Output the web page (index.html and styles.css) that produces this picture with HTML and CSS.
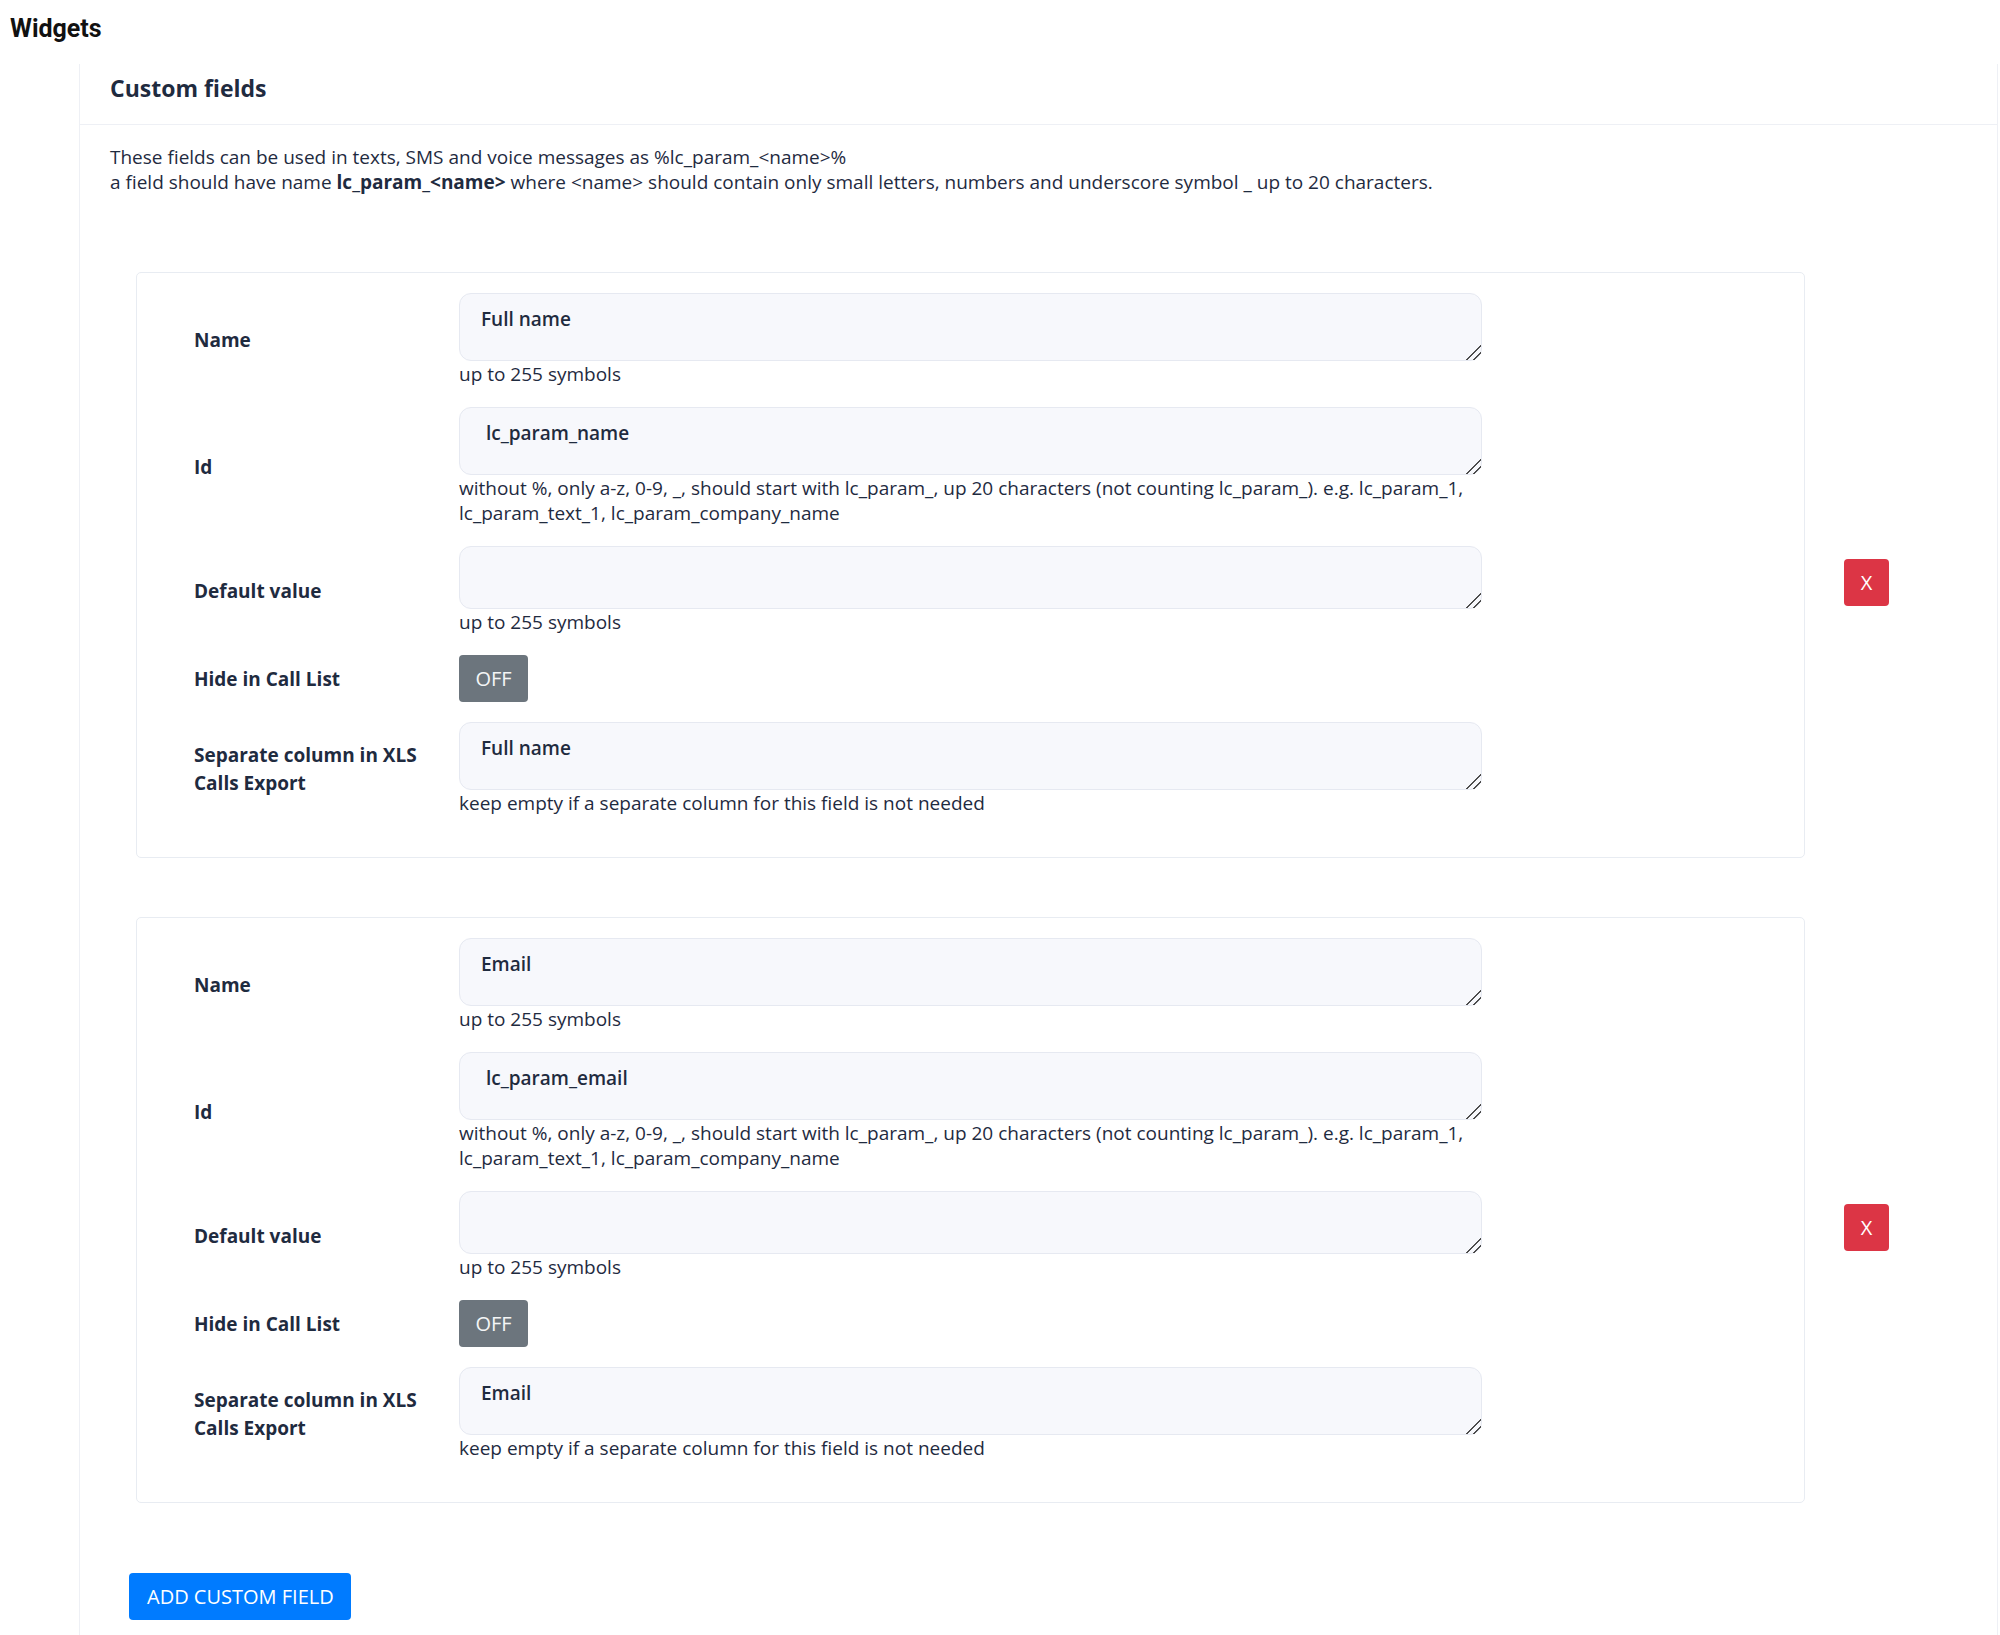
FILE: index.html
```html
<!DOCTYPE html>
<html lang="en">
<head>
<meta charset="utf-8">
<title>Widgets - Custom fields</title>
<link rel="stylesheet" href="styles.css">
</head>
<body>
<h1 class="page-title">Widgets</h1>
<div class="panel">
  <div class="panel-header"><h2 class="panel-title">Custom fields</h2></div>
  <div class="panel-body">
    <p class="intro">These fields can be used in texts, SMS and voice messages as %lc_param_&lt;name&gt;%<br>a field should have name <b>lc_param_&lt;name&gt;</b> where &lt;name&gt; should contain only small letters, numbers and underscore symbol _ up to 20 characters.</p>

    <div class="field-row">
      <div class="card">
        <div class="form-row">
          <label class="form-label">Name</label>
          <div class="form-control">
            <textarea class="input" readonly>Full name</textarea>
            <div class="help">up to 255 symbols</div>
          </div>
        </div>
        <div class="form-row">
          <label class="form-label">Id</label>
          <div class="form-control">
            <textarea class="input" readonly> lc_param_name</textarea>
            <div class="help">without %, only a-z, 0-9, _, should start with lc_param_, up 20 characters (not counting lc_param_). e.g. lc_param_1, lc_param_text_1, lc_param_company_name</div>
          </div>
        </div>
        <div class="form-row">
          <label class="form-label">Default value</label>
          <div class="form-control">
            <textarea class="input input-empty" readonly></textarea>
            <div class="help">up to 255 symbols</div>
          </div>
        </div>
        <div class="form-row">
          <label class="form-label">Hide in Call List</label>
          <div class="form-control">
            <button class="btn-toggle" type="button">OFF</button>
          </div>
        </div>
        <div class="form-row">
          <label class="form-label">Separate column in XLS Calls Export</label>
          <div class="form-control">
            <textarea class="input" readonly>Full name</textarea>
            <div class="help">keep empty if a separate column for this field is not needed</div>
          </div>
        </div>
      </div>
      <div class="remove-col"><button class="btn-remove" type="button">X</button></div>
    </div>

    <div class="field-row">
      <div class="card">
        <div class="form-row">
          <label class="form-label">Name</label>
          <div class="form-control">
            <textarea class="input" readonly>Email</textarea>
            <div class="help">up to 255 symbols</div>
          </div>
        </div>
        <div class="form-row">
          <label class="form-label">Id</label>
          <div class="form-control">
            <textarea class="input" readonly> lc_param_email</textarea>
            <div class="help">without %, only a-z, 0-9, _, should start with lc_param_, up 20 characters (not counting lc_param_). e.g. lc_param_1, lc_param_text_1, lc_param_company_name</div>
          </div>
        </div>
        <div class="form-row">
          <label class="form-label">Default value</label>
          <div class="form-control">
            <textarea class="input input-empty" readonly></textarea>
            <div class="help">up to 255 symbols</div>
          </div>
        </div>
        <div class="form-row">
          <label class="form-label">Hide in Call List</label>
          <div class="form-control">
            <button class="btn-toggle" type="button">OFF</button>
          </div>
        </div>
        <div class="form-row">
          <label class="form-label">Separate column in XLS Calls Export</label>
          <div class="form-control">
            <textarea class="input" readonly>Email</textarea>
            <div class="help">keep empty if a separate column for this field is not needed</div>
          </div>
        </div>
      </div>
      <div class="remove-col"><button class="btn-remove" type="button">X</button></div>
    </div>

    <button class="btn-add" type="button">ADD CUSTOM FIELD</button>
  </div>
</div>
</body>
</html>
```

FILE: styles.css
```css
* { box-sizing: border-box; }

html, body {
  margin: 0;
  padding: 0;
  background: #ffffff;
}

body {
  font-family: "Open Sans", "Noto Sans", "Liberation Sans", sans-serif;
  color: #1f2b3f;
  font-size: 19px;
  line-height: 25px;
}

.page-title {
  margin: 0;
  padding: 15px 10px 0;
  font-family: Roboto, "Liberation Sans", sans-serif;
  font-weight: 700;
  font-size: 25px;
  line-height: 28px;
  color: #111111;
}

.panel {
  margin: 21px 2px 0 79px;
  border-left: 1px solid #eef0f5;
  border-right: 1px solid #eef0f5;
  min-height: 1571px;
}

.panel-header {
  padding: 10px 30px 22px;
  border-bottom: 1px solid #eef0f5;
}

.panel-title {
  margin: 0;
  font-size: 23px;
  line-height: 28px;
  font-weight: 700;
  color: #1f2b3f;
}

.panel-body {
  padding: 20px 30px 40px;
}

.intro {
  margin: 0 0 77px;
}

.intro b { font-weight: 700; }

.field-row {
  display: flex;
  align-items: center;
  margin: 0 0 59px 26px;
}

.card {
  width: 1669px;
  flex: none;
  border: 1px solid #e8ecf2;
  border-radius: 5px;
  padding: 20px 0 41px 57px;
  display: flex;
  flex-direction: column;
  gap: 20px;
}

.form-row {
  display: grid;
  grid-template-columns: 240px 1023px;
  column-gap: 25px;
  align-items: center;
}

.form-label {
  font-weight: 700;
  line-height: 28px;
}

.form-control {
  display: flex;
  flex-direction: column;
  align-items: flex-start;
}

.input {
  display: block;
  width: 1023px;
  height: 68px;
  margin: 0;
  padding: 13px 21px;
  background: #f7f8fc;
  border: 1px solid #e6e9f1;
  border-radius: 12px;
  font-family: "Open Sans", "Noto Sans", sans-serif;
  font-size: 19px;
  font-weight: 600;
  line-height: 25px;
  color: #1f2b3f;
  overflow: hidden;
  outline: none;
}

.input::-webkit-resizer {
  background: linear-gradient(135deg,
    transparent 0, transparent 49%,
    #4d4d4d 49%, #4d4d4d 56%,
    transparent 56%, transparent 72%,
    #4d4d4d 72%, #4d4d4d 79%,
    transparent 79%);
}

.input-empty { height: 63px; }

.help {
  margin-top: 1px;
  width: 1023px;
}

.btn-toggle {
  height: 47px;
  width: 69px;
  padding: 0;
  border: none;
  border-radius: 4px;
  background: #6c757d;
  color: #f4f5f6;
  font-family: "Open Sans", "Noto Sans", sans-serif;
  font-size: 20px;
}

.remove-col {
  margin-left: 39px;
  margin-top: 35px;
}

.btn-remove {
  width: 45px;
  height: 47px;
  padding: 0;
  border: none;
  border-radius: 4px;
  background: #dc3545;
  color: #ffffff;
  font-family: "Open Sans", "Noto Sans", sans-serif;
  font-size: 20px;
}

.btn-add {
  margin: 11px 0 0 19px;
  height: 47px;
  padding: 0 17px 0 18px;
  border: none;
  border-radius: 4px;
  background: #007bff;
  color: #ffffff;
  font-family: "Open Sans", "Noto Sans", sans-serif;
  font-size: 20px;
  font-weight: 400;
}
```
